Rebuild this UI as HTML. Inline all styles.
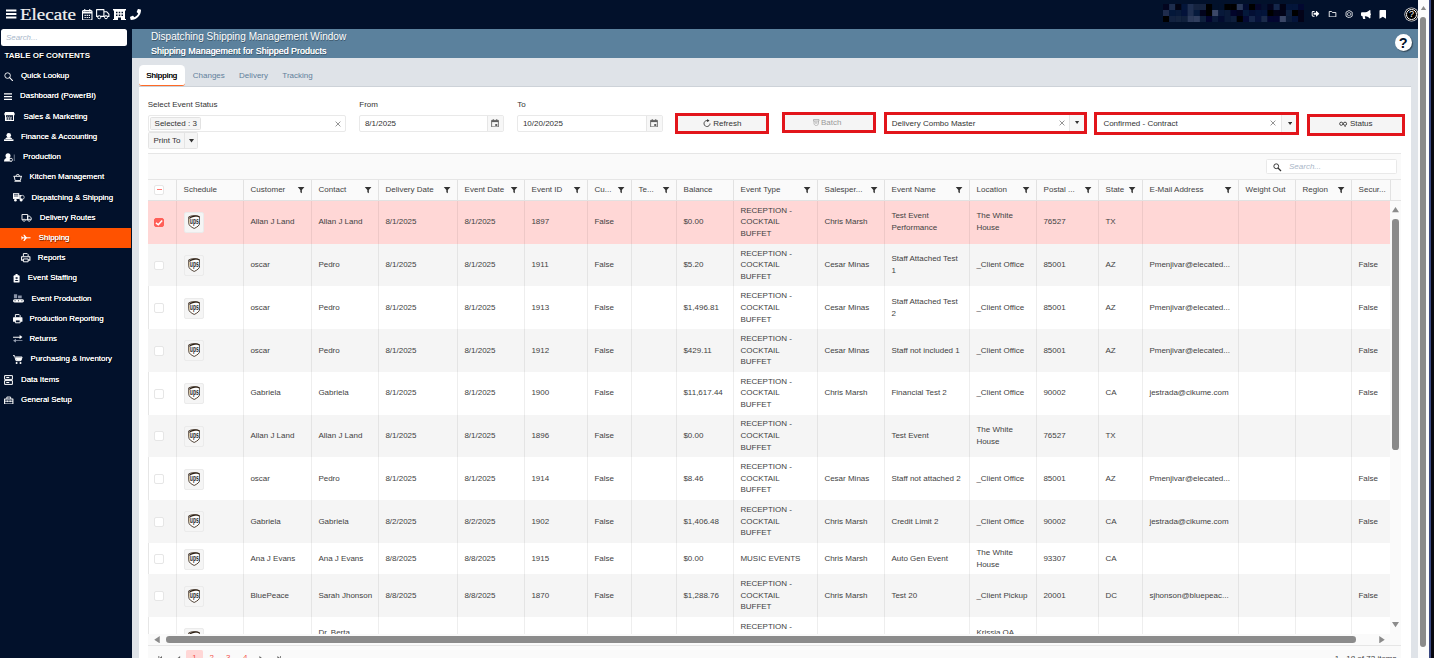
<!DOCTYPE html>
<html lang="en"><head><meta charset="utf-8"><title>Dispatching Shipping Management Window</title>
<style>
*{box-sizing:border-box}
html,body{margin:0;padding:0}
body{width:1434px;height:658px;overflow:hidden;position:relative;background:#fff;font-family:"Liberation Sans",Arial,sans-serif;font-size:8px;color:#424242;line-height:1.45}
.abs{position:absolute}
#topbar{left:0;top:0;width:1418px;height:29px;background:#02112b}
#sidebar{left:0;top:29px;width:132px;height:629px;background:#02112b}
#titlebar{left:132px;top:29px;width:1286px;height:29px;background:#5b819d}
#tabstrip{left:132px;top:58px;width:1286px;height:600px;background:#dfe3e8}
#panel{left:138.5px;top:86.8px;width:1272.5px;height:572px;background:#fff}
#tabline{left:138.5px;top:86px;width:1272.5px;height:1px;background:#cdd2d8}
.tab{position:absolute;top:64.8px;height:21px;line-height:21px;font-size:8px;color:#5f7f9b;white-space:nowrap}
.tab.act{left:138.6px;width:46.3px;background:#fff;border-radius:4.5px 4.5px 3px 3px;border-bottom:1.2px solid #ff6a26;color:#111;text-align:center;text-shadow:0 0 .2px #000}
.t1{left:151px;top:29.5px;font-size:10.1px;color:#fff;line-height:13px;white-space:nowrap;text-shadow:.5px .5px .5px rgba(0,0,0,.35)}
.t2{left:151px;top:45px;font-size:8.95px;color:#fff;line-height:13px;white-space:nowrap;text-shadow:0 0 .5px #fff,.5px .5px .5px rgba(0,0,0,.4)}
.sb{position:absolute;left:0;width:131px;height:20.2px;line-height:20.2px;color:#fff;font-size:7.9px;white-space:nowrap;text-shadow:0 0 .5px #fff,.5px .5px .7px rgba(0,0,0,.7)}
.sb span{position:absolute;top:0}
.sb svg{position:absolute;fill:#fff}
.sb.on{background:#ff5200}
.lbl{position:absolute;font-size:8px;line-height:10px;white-space:nowrap;color:#333}
.inp{position:absolute;border:.8px solid #e9e9e9;border-radius:2px;background:#fff;height:17px;line-height:15px;font-size:8px;color:#333;white-space:nowrap}
.red{position:absolute;border:3px solid #e2151b}
.btn{position:absolute;background:#f5f5f5;border:.8px solid #e4e4e4;border-radius:1.5px;text-align:center;font-size:8px;color:#333;white-space:nowrap}
#grid{left:147.5px;top:153.2px;width:1253.8px;height:520px;border:.8px solid #e6e6e6;background:#fff}
#gtool{left:148.2px;top:154px;width:1252.4px;height:26.3px;background:#fafafa;border-bottom:.8px solid #e6e6e6}
#ghead{left:148.2px;top:180.3px;width:1252.4px;height:20.3px;background:#fafafa;border-bottom:.8px solid #e2e2e2}
.hc{position:absolute;top:180.3px;height:20.3px;line-height:20px;border-left:.8px solid #e2e2e2;padding-left:6.6px;font-size:8px;color:#424242;white-space:nowrap}
.flt{position:absolute;right:5.6px;top:5.6px;width:8.2px;height:8.2px;fill:#333}
.row{position:absolute;left:148.2px;width:1242px;overflow:hidden}
.row.alt{background:#f5f5f5}
.row.sel{background:#ffd7d6}
.c{position:absolute;top:0;height:100%;padding-left:7.4px;display:flex;align-items:center;font-size:8px;line-height:11.6px;color:#424242;white-space:nowrap}
.cb{position:absolute;left:6px;width:9.9px;height:9.9px;border:.8px solid #e6e6e6;border-radius:2px;background:#fff}
.cb.on{background:#ff5f58;border-color:#ff5f58}
.upsb{position:absolute;left:35.6px;width:20.5px;height:21px;border:.8px solid #ebebeb;border-radius:2px;background:#f5f5f5}
.ups{position:absolute;left:3.3px;top:2.1px;width:12.4px;height:14px}
</style></head><body>
<div id="topbar" class="abs"></div><div id="sidebar" class="abs"></div><div id="titlebar" class="abs"></div><div id="tabstrip" class="abs"></div><div id="tabline" class="abs"></div><div id="panel" class="abs"></div><svg class="abs" style="left:6px;top:8.6px" width="11" height="10" viewBox="0 0 11 10"><path d="M0 .6h10.400v2H0zM0 4h10.400v2H0zM0 7.400h10.400v2H0z" fill="#fff"/></svg><div class="abs" style="left:20px;top:3.1px;font-family:'Liberation Serif',serif;font-size:15.7px;line-height:24px;color:#f2f2f2;-webkit-text-stroke:.2px #f2f2f2;white-space:nowrap;transform:scaleX(1.21);transform-origin:0 0">Elecate</div><svg class="abs" style="left:82px;top:8.5px" width="10.500" height="11.500" viewBox="0 0 21 23"><path d="M3 3h15a2 2 0 0 1 2 2v15a2 2 0 0 1-2 2H3a2 2 0 0 1-2-2V5a2 2 0 0 1 2-2z" fill="none" stroke="#fff" stroke-width="2.200"/><path d="M1 5h19v4H1z" fill="#fff"/><path d="M5.500 0v5M15.500 0v5" stroke="#fff" stroke-width="2.200"/><path d="M5 11.500h2.600v2.400H5zM9.200 11.500h2.600v2.400H9.200zM13.400 11.500H16v2.400h-2.600zM5 15.800h2.600v2.400H5zM9.200 15.800h2.600v2.400H9.200zM13.400 15.800H16v2.400h-2.600z" fill="#fff"/></svg><svg class="abs" style="left:96px;top:9px" width="13.500" height="10.500" viewBox="0 0 27 21"><path d="M1.200 1.200h14.600v13.600H1.200zM15.800 5.400h5.400l4.600 4.800v4.600h-10z" fill="none" stroke="#fff" stroke-width="2.200" stroke-linejoin="round"/><circle cx="6.500" cy="16.500" r="3" fill="#02112b" stroke="#fff" stroke-width="2"/><circle cx="20" cy="16.500" r="3" fill="#02112b" stroke="#fff" stroke-width="2"/></svg><svg class="abs" style="left:113px;top:8.5px" width="13" height="11.500" viewBox="0 0 26 23"><path d="M0 0h26v3h-2v17h2v3H16v-6h-6v6H0v-3h2V3H0z" fill="#fff"/><path d="M6 5.500h3v3H6zM11.500 5.500h3v3h-3zM17 5.500h3v3h-3zM6 11h3v3H6zM11.500 11h3v3h-3zM17 11h3v3h-3z" fill="#02112b"/></svg><svg class="abs" style="left:130px;top:8.5px" width="11" height="11" viewBox="0 0 512 512"><path fill="#fff" d="M493.400 24.600l-104-24c-11.300-2.600-22.900 3.300-27.500 13.900l-48 112c-4.200 9.800-1.400 21.300 6.900 28l60.600 49.600c-36 76.700-98.900 140.500-177.200 177.200l-49.600-60.600c-6.800-8.300-18.200-11.100-28-6.900l-112 48C3.900 366.500-2 378.100.6 389.400l24 104C27.100 504.200 36.700 512 48 512c256.100 0 464-207.500 464-464 0-11.200-7.700-20.900-18.600-23.400z"/></svg><svg class="abs" style="left:1162.800px;top:3.900px" width="141.400" height="18" viewBox="0 0 141.400 18"><rect x="0.00" y="0.0" width="6.300" height="6.150" fill="#03051f"/><rect x="6.14" y="0.0" width="6.300" height="6.150" fill="#1d2d4d"/><rect x="12.29" y="0.0" width="6.300" height="6.150" fill="#020312"/><rect x="18.43" y="0.0" width="6.300" height="6.150" fill="#03153a"/><rect x="24.58" y="0.0" width="6.300" height="6.150" fill="#1f2f50"/><rect x="30.72" y="0.0" width="6.300" height="6.150" fill="#15233f"/><rect x="36.87" y="0.0" width="6.300" height="6.150" fill="#15233f"/><rect x="43.02" y="0.0" width="6.300" height="6.150" fill="#000000"/><rect x="49.16" y="0.0" width="6.300" height="6.150" fill="#02112b"/><rect x="55.30" y="0.0" width="6.300" height="6.150" fill="#02112b"/><rect x="61.45" y="0.0" width="6.300" height="6.150" fill="#000000"/><rect x="67.59" y="0.0" width="6.300" height="6.150" fill="#000000"/><rect x="73.74" y="0.0" width="6.300" height="6.150" fill="#2a3858"/><rect x="79.88" y="0.0" width="6.300" height="6.150" fill="#020c30"/><rect x="86.03" y="0.0" width="6.300" height="6.150" fill="#000000"/><rect x="92.17" y="0.0" width="6.300" height="6.150" fill="#05062a"/><rect x="98.32" y="0.0" width="6.300" height="6.150" fill="#04102e"/><rect x="104.46" y="0.0" width="6.300" height="6.150" fill="#03041e"/><rect x="110.61" y="0.0" width="6.300" height="6.150" fill="#14264a"/><rect x="116.75" y="0.0" width="6.300" height="6.150" fill="#020214"/><rect x="122.90" y="0.0" width="6.300" height="6.150" fill="#03153a"/><rect x="129.04" y="0.0" width="6.300" height="6.150" fill="#03153a"/><rect x="135.19" y="0.0" width="6.300" height="6.150" fill="#020830"/><rect x="0.00" y="6.0" width="6.300" height="6.150" fill="#1f2c4c"/><rect x="6.14" y="6.0" width="6.300" height="6.150" fill="#04183a"/><rect x="12.29" y="6.0" width="6.300" height="6.150" fill="#081a3a"/><rect x="18.43" y="6.0" width="6.300" height="6.150" fill="#03123a"/><rect x="24.58" y="6.0" width="6.300" height="6.150" fill="#1f2f50"/><rect x="30.72" y="6.0" width="6.300" height="6.150" fill="#061a3c"/><rect x="36.87" y="6.0" width="6.300" height="6.150" fill="#02031c"/><rect x="43.02" y="6.0" width="6.300" height="6.150" fill="#000000"/><rect x="49.16" y="6.0" width="6.300" height="6.150" fill="#3c4868"/><rect x="55.30" y="6.0" width="6.300" height="6.150" fill="#08193a"/><rect x="61.45" y="6.0" width="6.300" height="6.150" fill="#0a1a38"/><rect x="67.59" y="6.0" width="6.300" height="6.150" fill="#02042a"/><rect x="73.74" y="6.0" width="6.300" height="6.150" fill="#020420"/><rect x="79.88" y="6.0" width="6.300" height="6.150" fill="#04183a"/><rect x="86.03" y="6.0" width="6.300" height="6.150" fill="#030f34"/><rect x="92.17" y="6.0" width="6.300" height="6.150" fill="#03143a"/><rect x="98.32" y="6.0" width="6.300" height="6.150" fill="#03143a"/><rect x="104.46" y="6.0" width="6.300" height="6.150" fill="#000000"/><rect x="110.61" y="6.0" width="6.300" height="6.150" fill="#020318"/><rect x="116.75" y="6.0" width="6.300" height="6.150" fill="#020318"/><rect x="122.90" y="6.0" width="6.300" height="6.150" fill="#0e2040"/><rect x="129.04" y="6.0" width="6.300" height="6.150" fill="#000000"/><rect x="135.19" y="6.0" width="6.300" height="6.150" fill="#030318"/><rect x="0.00" y="12.0" width="6.300" height="6.150" fill="#000000"/><rect x="6.14" y="12.0" width="6.300" height="6.150" fill="#122240"/><rect x="12.29" y="12.0" width="6.300" height="6.150" fill="#14243f"/><rect x="18.43" y="12.0" width="6.300" height="6.150" fill="#10203c"/><rect x="24.58" y="12.0" width="6.300" height="6.150" fill="#2c3a5a"/><rect x="30.72" y="12.0" width="6.300" height="6.150" fill="#303e5e"/><rect x="36.87" y="12.0" width="6.300" height="6.150" fill="#0e1f3c"/><rect x="43.02" y="12.0" width="6.300" height="6.150" fill="#03042e"/><rect x="49.16" y="12.0" width="6.300" height="6.150" fill="#0a1a3a"/><rect x="55.30" y="12.0" width="6.300" height="6.150" fill="#030c30"/><rect x="61.45" y="12.0" width="6.300" height="6.150" fill="#0a1a38"/><rect x="67.59" y="12.0" width="6.300" height="6.150" fill="#0e1e3c"/><rect x="73.74" y="12.0" width="6.300" height="6.150" fill="#000000"/><rect x="79.88" y="12.0" width="6.300" height="6.150" fill="#040a34"/><rect x="86.03" y="12.0" width="6.300" height="6.150" fill="#15264a"/><rect x="92.17" y="12.0" width="6.300" height="6.150" fill="#06123a"/><rect x="98.32" y="12.0" width="6.300" height="6.150" fill="#1a2a4a"/><rect x="104.46" y="12.0" width="6.300" height="6.150" fill="#030630"/><rect x="110.61" y="12.0" width="6.300" height="6.150" fill="#030630"/><rect x="116.75" y="12.0" width="6.300" height="6.150" fill="#3a4666"/><rect x="122.90" y="12.0" width="6.300" height="6.150" fill="#0c1c3a"/><rect x="129.04" y="12.0" width="6.300" height="6.150" fill="#04143a"/><rect x="135.19" y="12.0" width="6.300" height="6.150" fill="#030318"/></svg><svg class="abs" style="left:1310.600px;top:10.300px" width="9" height="7.600" viewBox="0 0 512 512"><path fill="#fff" d="M497 273L329 441c-15 15-41 4.500-41-17v-96H152c-13.300 0-24-10.700-24-24v-96c0-13.300 10.700-24 24-24h136V88c0-21.400 25.900-32 41-17l168 168c9.300 9.400 9.300 24.600 0 34zM192 436v-40c0-6.600-5.400-12-12-12H96c-17.700 0-32-14.300-32-32V160c0-17.700 14.300-32 32-32h84c6.600 0 12-5.400 12-12V76c0-6.600-5.400-12-12-12H96c-53 0-96 43-96 96v192c0 53 43 96 96 96h84c6.600 0 12-5.400 12-12z"/></svg><svg class="abs" style="left:1327.800px;top:11px" width="9.100" height="6.400" viewBox="0 0 19 16"><path d="M1.200 1.200h6l2 2.600h8.600v11H1.200z" fill="none" stroke="#fff" stroke-width="2.200" stroke-linejoin="round"/></svg><svg class="abs" style="left:1344.900px;top:10px" width="8.200" height="8.400" viewBox="0 0 18 19"><path d="M9 1l7 4v9l-7 4-7-4V5z" fill="none" stroke="#fff" stroke-width="1.800"/><path d="M9 5.500l3.500 2v4L9 13.500l-3.500-2v-4z" fill="none" stroke="#fff" stroke-width="1.500"/></svg><svg class="abs" style="left:1361px;top:9.700px" width="10" height="9" viewBox="0 0 576 512"><path fill="#fff" d="M576 240c0-23.630-12.950-44.040-32-55.120V32.010C544 23.260 537.020 0 512 0c-7.120 0-14.190 2.380-19.980 7.020l-85.030 68.030C364.280 109.190 310.660 128 256 128H64c-35.350 0-64 28.650-64 64v96c0 35.350 28.650 64 64 64h33.700c-1.390 10.480-2.180 21.140-2.180 32 0 39.770 9.260 77.350 25.560 110.940 5.190 10.690 16.520 17.060 28.400 17.060h74.280c26.050 0 41.690-29.840 25.900-50.560-16.400-21.520-26.150-48.360-26.150-77.440 0-11.110 1.620-21.790 4.410-32H256c54.660 0 108.280 18.810 150.980 52.950l85.030 68.030a32.023 32.023 0 0 0 19.980 7.020c24.920 0 32-22.780 32-32V295.130C563.050 284.040 576 263.630 576 240z"/></svg><svg class="abs" style="left:1378.900px;top:10px" width="7.600" height="8.800" viewBox="0 0 384 512"><path fill="#fff" d="M0 512V48C0 21.490 21.490 0 48 0h288c26.510 0 48 21.490 48 48v464L192 400 0 512z"/></svg><div class="abs" style="left:1406.200px;top:9px;width:10.800px;height:10.800px;border-radius:50%;border:1.200px solid #fff;background:#000;color:#fff;font-weight:400;font-size:9px;line-height:9.400px;text-align:center;box-shadow:0 0 0 .8px #000,0 0 0 1.600px rgba(255,255,255,.85)">?</div><div class="abs" style="left:1394.500px;top:33.800px;width:17.600px;height:17.600px;border-radius:50%;background:#fff;color:#02112b;font-weight:700;font-size:14.500px;line-height:18px;text-align:center;box-shadow:1px 1px 1px rgba(0,0,0,.45)">?</div><div class="abs t1">Dispatching Shipping Management Window</div><div class="abs t2">Shipping Management for Shipped Products</div><div class="tab act">Shipping</div><div class="tab" style="left:192.8px">Changes</div><div class="tab" style="left:239.1px">Delivery</div><div class="tab" style="left:282.3px">Tracking</div><div class="abs" style="left:1px;top:29px;width:126px;height:17.400px;background:#fff;border-radius:2.500px;font-size:7.900px;line-height:17.400px;padding-left:5px;color:#a9b7ca;font-style:italic">Search...</div><div class="abs" style="left:4.400px;top:50.300px;font-size:8px;line-height:11px;font-weight:700;color:#fff;white-space:nowrap;text-shadow:.5px .5px .6px #000">TABLE OF CONTENTS</div><div class="sb" style="top:66.2px"><svg viewBox="0 0 20 20" style="left:4px;top:5.6px;width:9px;height:9px"><circle cx="8" cy="8" r="6.200" fill="none" stroke="#fff" stroke-width="2"/><path d="M12.600 12.600L19 19" stroke="#fff" stroke-width="2.400" stroke-linecap="round"/></svg><span style="left:20.9px">Quick Lookup</span></div><div class="sb" style="top:86.4px"><svg viewBox="0 0 16 14" style="left:4px;top:6.3px;width:8px;height:7.5px"><path d="M0 0h16v2.600H0zM0 5.500h16v2.600H0zM0 11h16v2.600H0z"/></svg><span style="left:20.1px">Dashboard (PowerBI)</span></div><div class="sb" style="top:106.7px"><svg viewBox="0 0 22 18" style="left:4px;top:5.6px;width:11px;height:9px"><path d="M2.500 0h17L22 4.500H0zM1 4.500h20v2.200H1zM2 6h2v12H2zM18 6h2v12h-2zM2 16h18v2H2z"/><path d="M4 9l2.500 7M8 9l2.500 7M12 9l2.500 7M7 9l-2.500 7M11 9l-2.500 7M15.500 9l-2.500 7" stroke="#fff" stroke-width="1.200" fill="none"/></svg><span style="left:23.4px">Sales &amp; Marketing</span></div><div class="sb" style="top:126.9px"><svg viewBox="0 0 20 18" style="left:4px;top:5.8px;width:9.5px;height:8.5px"><circle cx="10" cy="5" r="4.800"/><path d="M2.500 12.500C4 9.500 7 9 10 9s6 .5 7.500 3.500z"/><path d="M0 13.500h20V18H0z"/></svg><span style="left:20.9px">Finance &amp; Accounting</span></div><div class="sb" style="top:147.1px"><svg viewBox="0 0 24 18" style="left:4px;top:5.6px;width:12px;height:9px"><circle cx="8" cy="5.500" r="5"/><path d="M0 17c0-5 3-7.500 8-7.500s8 2.500 8 7.500z"/><circle cx="14" cy="13.500" r="3" fill="#02112b" stroke="#fff" stroke-width="1.600"/><path d="M20.500 3v13" stroke="#9aa3b5" stroke-width="1.400"/></svg><span style="left:23.1px">Production</span></div><div class="sb" style="top:167.3px"><svg viewBox="0 0 20 20" style="left:13px;top:5.3px;width:9.5px;height:9.5px"><path d="M2.500 7l2 9h11l2-9M1 7h18" fill="none" stroke="#fff" stroke-width="2" stroke-linejoin="round"/><path d="M6.500 6c0-4 7-4 7 0" fill="none" stroke="#fff" stroke-width="2"/><path d="M3 18.500h14" stroke="#fff" stroke-width="2"/></svg><span style="left:29.6px">Kitchen Management</span></div><div class="sb" style="top:187.6px"><svg viewBox="0 0 24 18" style="left:13px;top:5.6px;width:11.5px;height:9px"><path d="M0 0h13v12H0z"/><path d="M13 4h4l4 4v5h-8z"/><circle cx="5" cy="14.500" r="2.700"/><circle cx="17" cy="14.500" r="2.700"/><circle cx="19.500" cy="8.500" r="4" fill="#02112b" stroke="#fff" stroke-width="1.400"/><path d="M2 3h9M2 6h9" stroke="#02112b" stroke-width="1.400"/></svg><span style="left:31.5px">Dispatching &amp; Shipping</span></div><div class="sb" style="top:207.8px"><svg viewBox="0 0 26 20" style="left:21px;top:6.2px;width:11.2px;height:7.8px"><path d="M1.200 1.200h14.600v13.600H1.200zM15.800 5.400h5l4 4.600v4.800h-9z" fill="none" stroke="#fff" stroke-width="2.400" stroke-linejoin="round"/><circle cx="6.500" cy="16" r="2.800" fill="#02112b" stroke="#fff" stroke-width="2"/><circle cx="19.500" cy="16" r="2.800" fill="#02112b" stroke="#fff" stroke-width="2"/></svg><span style="left:39.8px">Delivery Routes</span></div><div class="abs" style="left:0;top:228.4px;width:131px;height:20.1px;background:#ff5200"></div><div class="sb" style="top:228.0px"><svg viewBox="0 0 24 16" style="left:21px;top:6.3px;width:10px;height:7.6px"><path d="M1.500 8h20.500" stroke="#fff" stroke-width="2.400" stroke-linecap="round" fill="none"/><path d="M9 8L5.500 .5h2.800L14.500 8 8.300 15.500H5.500z"/><path d="M2.500 8L.3 4.200h2L5 8 2.300 11.800h-2z"/></svg><span style="left:38.8px">Shipping</span></div><div class="sb" style="top:248.2px"><svg viewBox="0 0 20 20" style="left:21px;top:5.3px;width:9.5px;height:9.5px"><path d="M5 7V1.200h8l2 2V7" fill="none" stroke="#fff" stroke-width="2"/><path d="M1.200 8h17.600v7H1.200z" fill="none" stroke="#fff" stroke-width="2.200" stroke-linejoin="round"/><path d="M5 12.500h10v6H5z" fill="#02112b" stroke="#fff" stroke-width="2"/></svg><span style="left:37.8px">Reports</span></div><div class="sb" style="top:268.4px"><svg viewBox="0 0 16 20" style="left:13px;top:5.8px;width:7.2px;height:8.6px"><rect x="1" y="3" width="14" height="17" rx="2"/><rect x="5.500" y="0" width="5" height="5" rx="1"/><circle cx="8" cy="9.500" r="2.600" fill="#02112b"/><path d="M3.800 16.500c0-3.600 8.400-3.600 8.400 0z" fill="#02112b"/><circle cx="8" cy="9.500" r="1.100" fill="#cfd6e4"/></svg><span style="left:27.8px">Event Staffing</span></div><div class="sb" style="top:288.7px"><svg viewBox="0 0 24 18" style="left:13px;top:5.8px;width:11px;height:8.5px"><path d="M2 0h7v9H2zM11 3h8v6h-8z" fill="#8892a6"/><rect x="0" y="11" width="24" height="7" rx="3.500"/><circle cx="4.500" cy="14.500" r="1.300" fill="#02112b"/><circle cx="12" cy="14.500" r="1.300" fill="#02112b"/><circle cx="19.500" cy="14.500" r="1.300" fill="#02112b"/></svg><span style="left:31.4px">Event Production</span></div><div class="sb" style="top:308.9px"><svg viewBox="0 0 20 20" style="left:13px;top:5.3px;width:9.5px;height:9.5px"><path d="M5 7V1.200h8l2 2V7" fill="none" stroke="#fff" stroke-width="2"/><path d="M1.200 8h17.600v7H1.200z" fill="#fff" stroke="#fff" stroke-width="2.200" stroke-linejoin="round"/><path d="M5 12.500h10v6H5z" fill="#02112b" stroke="#fff" stroke-width="2"/></svg><span style="left:29.4px">Production Reporting</span></div><div class="sb" style="top:329.1px"><svg viewBox="0 0 20 16" style="left:13px;top:6.3px;width:9.5px;height:7.5px"><path d="M0 3.500h14V0l6 4.500-6 4.500V5.800H0z" /><path d="M20 11H6V8l-6 4 6 4v-3h14z" fill="#9aa3b5"/></svg><span style="left:29.4px">Returns</span></div><div class="sb" style="top:349.4px"><svg viewBox="0 0 22 20" style="left:13.4px;top:5.3px;width:10px;height:9.5px"><path d="M0 1h3.500l3 11h11l2.500-8H6" fill="none" stroke="#fff" stroke-width="2.200" stroke-linejoin="round"/><path d="M6 5h13.500l-2 6.500H7.500z"/><circle cx="8" cy="17" r="2.200"/><circle cx="16.500" cy="17" r="2.200"/></svg><span style="left:30.4px">Purchasing &amp; Inventory</span></div><div class="sb" style="top:369.6px"><svg viewBox="0 0 18 20" style="left:4px;top:5.1px;width:9px;height:10px"><path d="M1.200 1.200h15.600v7.600H1.200zM1.200 11.200h15.600v7.600H1.200z" fill="none" stroke="#fff" stroke-width="2" stroke-linejoin="round"/><path d="M4.500 5h6M4.500 15h6" stroke="#fff" stroke-width="2"/></svg><span style="left:21px">Data Items</span></div><div class="sb" style="top:389.8px"><svg viewBox="0 0 20 18" style="left:4px;top:5.8px;width:9.5px;height:8.5px"><path d="M1.200 6.200h17.600v10.600H1.200z" fill="none" stroke="#fff" stroke-width="2.200" stroke-linejoin="round"/><path d="M6 6V2.200h8V6" fill="none" stroke="#fff" stroke-width="2"/><path d="M1 11h18" stroke="#fff" stroke-width="2"/><path d="M7 9.500v3.500M13 9.500v3.500" stroke="#fff" stroke-width="2"/></svg><span style="left:21px">General Setup</span></div><div class="lbl" style="left:147.700px;top:100.300px">Select Event Status</div><div class="lbl" style="left:359.300px;top:100.300px">From</div><div class="lbl" style="left:517.300px;top:100.300px">To</div><div class="inp" style="left:147.700px;top:114.500px;width:198px"><span style="position:absolute;left:1.300px;top:1.700px;height:12.400px;line-height:11px;padding:0 3.600px;background:#f5f5f5;border:.8px solid #e2e2e2;border-radius:1.500px">Selected : 3</span><svg style="position:absolute;right:3.500px;top:5px" width="6" height="6" viewBox="0 0 10 10"><path d="M1 1l8 8M9 1l-8 8" stroke="#777" stroke-width="1.300"/></svg></div><div class="inp" style="left:359.300px;top:114.500px;width:144.800px;padding-left:4.600px">8/1/2025<span style="position:absolute;right:0;top:0;width:16px;height:15.400px;background:#f7f7f7;border-left:.8px solid #e6e6e6"><svg style="position:absolute;right:4px;top:3.400px" width="8" height="8.500" viewBox="0 0 16 17"><path d="M1.200 2.800h13.600v13H1.200z" fill="none" stroke="#606060" stroke-width="1.700"/><path d="M1.200 2.800h13.600v3.400H1.200z" fill="#606060"/><path d="M4.500 0v4M11.500 0v4" stroke="#606060" stroke-width="1.700"/><path d="M8.500 10h4v4h-4z" fill="#606060"/></svg></span></div><div class="inp" style="left:517.300px;top:114.500px;width:145.400px;padding-left:4.600px">10/20/2025<span style="position:absolute;right:0;top:0;width:16px;height:15.400px;background:#f7f7f7;border-left:.8px solid #e6e6e6"><svg style="position:absolute;right:4px;top:3.400px" width="8" height="8.500" viewBox="0 0 16 17"><path d="M1.200 2.800h13.600v13H1.200z" fill="none" stroke="#606060" stroke-width="1.700"/><path d="M1.200 2.800h13.600v3.400H1.200z" fill="#606060"/><path d="M4.500 0v4M11.500 0v4" stroke="#606060" stroke-width="1.700"/><path d="M8.500 10h4v4h-4z" fill="#606060"/></svg></span></div><div class="btn" style="left:147.700px;top:132px;width:50.800px;height:16.600px;line-height:15px;text-align:left;padding-left:4.800px">Print To<span style="position:absolute;left:35.500px;top:0;height:15px;border-left:.8px solid #e4e4e4"></span><svg style="position:absolute;left:40.500px;top:6px" width="5" height="3.500" viewBox="0 0 10 7"><path d="M0 0h10L5 7z" fill="#333"/></svg></div><div class="red" style="left:675.100px;top:113.100px;width:94px;height:21.200px"></div><div class="btn" style="left:678.100px;top:116.100px;width:88px;height:15.200px;line-height:15.600px;border:0"><svg style="vertical-align:-1.800px;margin-right:2.500px" width="8" height="8.500" viewBox="0 0 16 17"><path d="M10.500 3.600A6 6 0 1 0 14 9" fill="none" stroke="#333" stroke-width="1.700"/><path d="M8.500 0l4.500 3.600-5 2.400z" fill="#333"/></svg>Refresh</div><div class="red" style="left:781.500px;top:112.200px;width:94.500px;height:20.500px"></div><div class="btn" style="left:784.500px;top:115.200px;width:88.500px;height:14.500px;line-height:16.800px;border:0;color:#9a9a9a;padding-right:3px"><svg style="vertical-align:-1px;margin-right:1.500px" width="6.500" height="7" viewBox="0 0 13 14"><path d="M1 1h11v3H1zM2 4v5c0 2 2 3.500 4.500 4.500C9 12.500 11 11 11 9V4" fill="none" stroke="#9a9a9a" stroke-width="1.300"/><path d="M4 6.500h5M4 8.500h5" stroke="#9a9a9a" stroke-width="1"/></svg>Batch</div><div class="red" style="left:884.200px;top:111.700px;width:202.500px;height:22.600px"></div><div class="inp" style="left:887.200px;top:114.700px;width:196.500px;height:16.600px;border:0;border-radius:0;padding-left:4.600px;line-height:18.400px">Delivery Combo Master<svg style="position:absolute;right:18.7px;top:5.200px" width="6" height="6" viewBox="0 0 10 10"><path d="M1 1l8 8M9 1l-8 8" stroke="#777" stroke-width="1.300"/></svg><span style="position:absolute;right:0;top:0;width:14.400px;height:100%;background:#f7f7f7;border-left:.8px solid #e6e6e6"><svg style="position:absolute;left:5.200px;top:6.800px" width="4.200" height="3" viewBox="0 0 10 7"><path d="M0 0h10L5 7z" fill="#333"/></svg></span></div><div class="red" style="left:1094.200px;top:112.200px;width:204.700px;height:22.600px"></div><div class="inp" style="left:1097.200px;top:115.200px;width:198.700px;height:16.600px;border:0;border-radius:0;padding-left:6.200px;line-height:17px">Confirmed - Contract<svg style="position:absolute;right:19.6px;top:5.200px" width="6" height="6" viewBox="0 0 10 10"><path d="M1 1l8 8M9 1l-8 8" stroke="#777" stroke-width="1.300"/></svg><span style="position:absolute;right:0;top:0;width:14.400px;height:100%;background:#f7f7f7;border-left:.8px solid #e6e6e6"><svg style="position:absolute;left:5.200px;top:6.800px" width="4.200" height="3" viewBox="0 0 10 7"><path d="M0 0h10L5 7z" fill="#333"/></svg></span></div><div class="red" style="left:1307.100px;top:113.900px;width:97.800px;height:21.700px"></div><div class="btn" style="left:1310.100px;top:116.900px;width:91.800px;height:15.700px;line-height:14px;border:0"><svg style="vertical-align:-1.500px;margin-right:1.500px" width="9" height="6.500" viewBox="0 0 18 13"><circle cx="4.500" cy="5.500" r="3.200" fill="none" stroke="#333" stroke-width="1.800"/><circle cx="12" cy="5.500" r="3.200" fill="none" stroke="#333" stroke-width="1.800"/><path d="M12 9v4l2-1.500" stroke="#333" stroke-width="1.400" fill="none"/></svg>Status</div><div id="grid" class="abs"></div><div id="gtool" class="abs"></div><div id="ghead" class="abs"></div><div class="inp" style="left:1265.500px;top:158.600px;width:131px;height:15.800px;border-radius:1.500px"><svg style="position:absolute;left:6.500px;top:3.600px" width="8.500" height="8.500" viewBox="0 0 17 17"><circle cx="6.500" cy="6.500" r="4.800" fill="none" stroke="#333" stroke-width="1.900"/><path d="M10 10l6 6" stroke="#333" stroke-width="2.400"/></svg><span style="position:absolute;left:22.500px;top:0;line-height:14.600px;font-style:italic;color:#a9b6c7">Search...</span></div><div class="hc" style="left:148.2px;width:28.5px;border-left:0;padding:0"><span class="cb" style="top:5.200px;left:6.200px;width:9.500px;height:9.600px"><i style="position:absolute;left:1.400px;top:2.800px;width:5.600px;height:1.200px;background:#ff7671"></i></span></div><div class="hc" style="left:176.0px;width:67.0px">Schedule</div><div class="hc" style="left:243.0px;width:68.0px">Customer<svg class="flt" viewBox="0 0 16 16"><path d="M1.5 2h13l-5 6v6l-3-1.6V8z"/></svg></div><div class="hc" style="left:311.0px;width:67.0px">Contact<svg class="flt" viewBox="0 0 16 16"><path d="M1.5 2h13l-5 6v6l-3-1.6V8z"/></svg></div><div class="hc" style="left:378.0px;width:79.0px">Delivery Date<svg class="flt" viewBox="0 0 16 16"><path d="M1.5 2h13l-5 6v6l-3-1.6V8z"/></svg></div><div class="hc" style="left:457.0px;width:67.0px">Event Date<svg class="flt" viewBox="0 0 16 16"><path d="M1.5 2h13l-5 6v6l-3-1.6V8z"/></svg></div><div class="hc" style="left:524.0px;width:63.0px">Event ID<svg class="flt" viewBox="0 0 16 16"><path d="M1.5 2h13l-5 6v6l-3-1.6V8z"/></svg></div><div class="hc" style="left:587.0px;width:44.0px">Cu...<svg class="flt" viewBox="0 0 16 16"><path d="M1.5 2h13l-5 6v6l-3-1.6V8z"/></svg></div><div class="hc" style="left:631.0px;width:45.0px">Te...<svg class="flt" viewBox="0 0 16 16"><path d="M1.5 2h13l-5 6v6l-3-1.6V8z"/></svg></div><div class="hc" style="left:676.0px;width:57.0px">Balance</div><div class="hc" style="left:733.0px;width:84.0px">Event Type<svg class="flt" viewBox="0 0 16 16"><path d="M1.5 2h13l-5 6v6l-3-1.6V8z"/></svg></div><div class="hc" style="left:817.0px;width:67.0px">Salesper...<svg class="flt" viewBox="0 0 16 16"><path d="M1.5 2h13l-5 6v6l-3-1.6V8z"/></svg></div><div class="hc" style="left:884.0px;width:85.0px">Event Name<svg class="flt" viewBox="0 0 16 16"><path d="M1.5 2h13l-5 6v6l-3-1.6V8z"/></svg></div><div class="hc" style="left:969.0px;width:67.0px">Location<svg class="flt" viewBox="0 0 16 16"><path d="M1.5 2h13l-5 6v6l-3-1.6V8z"/></svg></div><div class="hc" style="left:1036.0px;width:62.0px">Postal ...<svg class="flt" viewBox="0 0 16 16"><path d="M1.5 2h13l-5 6v6l-3-1.6V8z"/></svg></div><div class="hc" style="left:1098.0px;width:44.0px">State<svg class="flt" viewBox="0 0 16 16"><path d="M1.5 2h13l-5 6v6l-3-1.6V8z"/></svg></div><div class="hc" style="left:1142.0px;width:96.0px">E-Mail Address<svg class="flt" viewBox="0 0 16 16"><path d="M1.5 2h13l-5 6v6l-3-1.6V8z"/></svg></div><div class="hc" style="left:1238.0px;width:57.0px">Weight Out</div><div class="hc" style="left:1295.0px;width:56.0px">Region<svg class="flt" viewBox="0 0 16 16"><path d="M1.5 2h13l-5 6v6l-3-1.6V8z"/></svg></div><div class="hc" style="left:1351.0px;width:39.0px">Secur...</div><div class="hc" style="left:1390px;width:10.600px;padding:0"></div><div class="row sel" style="top:200.5px;height:43.1px"><span class="cb on" style="top:17.1px"><svg style="position:absolute;left:-.8px;top:-.8px" width="9.900" height="9.900" viewBox="0 0 9.900 9.900"><path d="M1.900 4.900l2.400 1.900L8.200 2.400" fill="none" stroke="#fff" stroke-width="1.500"/></svg></span><div class="c" style="left:27.8px;width:67.0px"></div><span class="upsb" style="top:11.5px"><svg class="ups" viewBox="0 0 24 27"><path d="M1.400 3.600C6.500 .4 17.500 .4 22.600 3.600v11.600c0 5.400-5 8-10.600 10.800C6.400 23.200 1.400 20.600 1.400 15.200z" fill="#fdfdfd" stroke="#3b2a1c" stroke-width="1.700"/><path d="M2.600 6.400C8 1.200 19 1 22 3.800" fill="none" stroke="#2a1d12" stroke-width="2.200"/><text x="12.300" y="17.800" text-anchor="middle" font-family="Liberation Sans, sans-serif" font-weight="700" font-size="17" fill="#2b2b2b" textLength="17.500" lengthAdjust="spacingAndGlyphs">ups</text></svg></span><div class="c" style="left:94.8px;width:68.0px"><span>Allan J Land</span></div><div class="c" style="left:162.8px;width:67.0px"><span>Allan J Land</span></div><div class="c" style="left:229.8px;width:79.0px"><span>8/1/2025</span></div><div class="c" style="left:308.8px;width:67.0px"><span>8/1/2025</span></div><div class="c" style="left:375.8px;width:63.0px"><span>1897</span></div><div class="c" style="left:438.8px;width:44.0px"><span>False</span></div><div class="c" style="left:482.8px;width:45.0px"><span></span></div><div class="c" style="left:527.8px;width:57.0px"><span>$0.00</span></div><div class="c" style="left:584.8px;width:84.0px"><span>RECEPTION -<br>COCKTAIL<br>BUFFET</span></div><div class="c" style="left:668.8px;width:67.0px"><span>Chris Marsh</span></div><div class="c" style="left:735.8px;width:85.0px"><span>Test Event<br>Performance</span></div><div class="c" style="left:820.8px;width:67.0px"><span>The White<br>House</span></div><div class="c" style="left:887.8px;width:62.0px"><span>76527</span></div><div class="c" style="left:949.8px;width:44.0px"><span>TX</span></div><div class="c" style="left:993.8px;width:96.0px"><span></span></div><div class="c" style="left:1089.8px;width:57.0px"><span></span></div><div class="c" style="left:1146.8px;width:56.0px"><span></span></div><div class="c" style="left:1202.8px;width:39.0px"><span></span></div></div><div class="row alt" style="top:243.6px;height:42.8px"><span class="cb" style="top:17.0px"></span><div class="c" style="left:27.8px;width:67.0px"></div><span class="upsb" style="top:11.4px"><svg class="ups" viewBox="0 0 24 27"><path d="M1.400 3.600C6.500 .4 17.500 .4 22.600 3.600v11.600c0 5.400-5 8-10.600 10.800C6.400 23.200 1.400 20.600 1.400 15.200z" fill="#fdfdfd" stroke="#3b2a1c" stroke-width="1.700"/><path d="M2.600 6.400C8 1.200 19 1 22 3.800" fill="none" stroke="#2a1d12" stroke-width="2.200"/><text x="12.300" y="17.800" text-anchor="middle" font-family="Liberation Sans, sans-serif" font-weight="700" font-size="17" fill="#2b2b2b" textLength="17.500" lengthAdjust="spacingAndGlyphs">ups</text></svg></span><div class="c" style="left:94.8px;width:68.0px"><span>oscar</span></div><div class="c" style="left:162.8px;width:67.0px"><span>Pedro</span></div><div class="c" style="left:229.8px;width:79.0px"><span>8/1/2025</span></div><div class="c" style="left:308.8px;width:67.0px"><span>8/1/2025</span></div><div class="c" style="left:375.8px;width:63.0px"><span>1911</span></div><div class="c" style="left:438.8px;width:44.0px"><span>False</span></div><div class="c" style="left:482.8px;width:45.0px"><span></span></div><div class="c" style="left:527.8px;width:57.0px"><span>$5.20</span></div><div class="c" style="left:584.8px;width:84.0px"><span>RECEPTION -<br>COCKTAIL<br>BUFFET</span></div><div class="c" style="left:668.8px;width:67.0px"><span>Cesar Minas</span></div><div class="c" style="left:735.8px;width:85.0px"><span>Staff Attached Test<br>1</span></div><div class="c" style="left:820.8px;width:67.0px"><span>_Client Office</span></div><div class="c" style="left:887.8px;width:62.0px"><span>85001</span></div><div class="c" style="left:949.8px;width:44.0px"><span>AZ</span></div><div class="c" style="left:993.8px;width:96.0px"><span>Pmenjivar@elecated...</span></div><div class="c" style="left:1089.8px;width:57.0px"><span></span></div><div class="c" style="left:1146.8px;width:56.0px"><span></span></div><div class="c" style="left:1202.8px;width:39.0px"><span>False</span></div></div><div class="row" style="top:286.4px;height:42.7px"><span class="cb" style="top:17.0px"></span><div class="c" style="left:27.8px;width:67.0px"></div><span class="upsb" style="top:11.4px"><svg class="ups" viewBox="0 0 24 27"><path d="M1.400 3.600C6.500 .4 17.500 .4 22.600 3.600v11.600c0 5.400-5 8-10.600 10.800C6.400 23.200 1.400 20.600 1.400 15.200z" fill="#fdfdfd" stroke="#3b2a1c" stroke-width="1.700"/><path d="M2.600 6.400C8 1.200 19 1 22 3.800" fill="none" stroke="#2a1d12" stroke-width="2.200"/><text x="12.300" y="17.800" text-anchor="middle" font-family="Liberation Sans, sans-serif" font-weight="700" font-size="17" fill="#2b2b2b" textLength="17.500" lengthAdjust="spacingAndGlyphs">ups</text></svg></span><div class="c" style="left:94.8px;width:68.0px"><span>oscar</span></div><div class="c" style="left:162.8px;width:67.0px"><span>Pedro</span></div><div class="c" style="left:229.8px;width:79.0px"><span>8/1/2025</span></div><div class="c" style="left:308.8px;width:67.0px"><span>8/1/2025</span></div><div class="c" style="left:375.8px;width:63.0px"><span>1913</span></div><div class="c" style="left:438.8px;width:44.0px"><span>False</span></div><div class="c" style="left:482.8px;width:45.0px"><span></span></div><div class="c" style="left:527.8px;width:57.0px"><span>$1,496.81</span></div><div class="c" style="left:584.8px;width:84.0px"><span>RECEPTION -<br>COCKTAIL<br>BUFFET</span></div><div class="c" style="left:668.8px;width:67.0px"><span>Cesar Minas</span></div><div class="c" style="left:735.8px;width:85.0px"><span>Staff Attached Test<br>2</span></div><div class="c" style="left:820.8px;width:67.0px"><span>_Client Office</span></div><div class="c" style="left:887.8px;width:62.0px"><span>85001</span></div><div class="c" style="left:949.8px;width:44.0px"><span>AZ</span></div><div class="c" style="left:993.8px;width:96.0px"><span>Pmenjivar@elecated...</span></div><div class="c" style="left:1089.8px;width:57.0px"><span></span></div><div class="c" style="left:1146.8px;width:56.0px"><span></span></div><div class="c" style="left:1202.8px;width:39.0px"><span>False</span></div></div><div class="row alt" style="top:329.1px;height:42.7px"><span class="cb" style="top:16.9px"></span><div class="c" style="left:27.8px;width:67.0px"></div><span class="upsb" style="top:11.3px"><svg class="ups" viewBox="0 0 24 27"><path d="M1.400 3.600C6.500 .4 17.500 .4 22.600 3.600v11.600c0 5.400-5 8-10.600 10.800C6.400 23.200 1.400 20.600 1.400 15.200z" fill="#fdfdfd" stroke="#3b2a1c" stroke-width="1.700"/><path d="M2.600 6.400C8 1.200 19 1 22 3.800" fill="none" stroke="#2a1d12" stroke-width="2.200"/><text x="12.300" y="17.800" text-anchor="middle" font-family="Liberation Sans, sans-serif" font-weight="700" font-size="17" fill="#2b2b2b" textLength="17.500" lengthAdjust="spacingAndGlyphs">ups</text></svg></span><div class="c" style="left:94.8px;width:68.0px"><span>oscar</span></div><div class="c" style="left:162.8px;width:67.0px"><span>Pedro</span></div><div class="c" style="left:229.8px;width:79.0px"><span>8/1/2025</span></div><div class="c" style="left:308.8px;width:67.0px"><span>8/1/2025</span></div><div class="c" style="left:375.8px;width:63.0px"><span>1912</span></div><div class="c" style="left:438.8px;width:44.0px"><span>False</span></div><div class="c" style="left:482.8px;width:45.0px"><span></span></div><div class="c" style="left:527.8px;width:57.0px"><span>$429.11</span></div><div class="c" style="left:584.8px;width:84.0px"><span>RECEPTION -<br>COCKTAIL<br>BUFFET</span></div><div class="c" style="left:668.8px;width:67.0px"><span>Cesar Minas</span></div><div class="c" style="left:735.8px;width:85.0px"><span>Staff not included 1</span></div><div class="c" style="left:820.8px;width:67.0px"><span>_Client Office</span></div><div class="c" style="left:887.8px;width:62.0px"><span>85001</span></div><div class="c" style="left:949.8px;width:44.0px"><span>AZ</span></div><div class="c" style="left:993.8px;width:96.0px"><span>Pmenjivar@elecated...</span></div><div class="c" style="left:1089.8px;width:57.0px"><span></span></div><div class="c" style="left:1146.8px;width:56.0px"><span></span></div><div class="c" style="left:1202.8px;width:39.0px"><span>False</span></div></div><div class="row" style="top:371.8px;height:42.7px"><span class="cb" style="top:16.9px"></span><div class="c" style="left:27.8px;width:67.0px"></div><span class="upsb" style="top:11.3px"><svg class="ups" viewBox="0 0 24 27"><path d="M1.400 3.600C6.500 .4 17.500 .4 22.600 3.600v11.600c0 5.400-5 8-10.600 10.800C6.400 23.200 1.400 20.600 1.400 15.200z" fill="#fdfdfd" stroke="#3b2a1c" stroke-width="1.700"/><path d="M2.600 6.400C8 1.200 19 1 22 3.800" fill="none" stroke="#2a1d12" stroke-width="2.200"/><text x="12.300" y="17.800" text-anchor="middle" font-family="Liberation Sans, sans-serif" font-weight="700" font-size="17" fill="#2b2b2b" textLength="17.500" lengthAdjust="spacingAndGlyphs">ups</text></svg></span><div class="c" style="left:94.8px;width:68.0px"><span>Gabriela</span></div><div class="c" style="left:162.8px;width:67.0px"><span>Gabriela</span></div><div class="c" style="left:229.8px;width:79.0px"><span>8/1/2025</span></div><div class="c" style="left:308.8px;width:67.0px"><span>8/1/2025</span></div><div class="c" style="left:375.8px;width:63.0px"><span>1900</span></div><div class="c" style="left:438.8px;width:44.0px"><span>False</span></div><div class="c" style="left:482.8px;width:45.0px"><span></span></div><div class="c" style="left:527.8px;width:57.0px"><span>$11,617.44</span></div><div class="c" style="left:584.8px;width:84.0px"><span>RECEPTION -<br>COCKTAIL<br>BUFFET</span></div><div class="c" style="left:668.8px;width:67.0px"><span>Chris Marsh</span></div><div class="c" style="left:735.8px;width:85.0px"><span>Financial Test 2</span></div><div class="c" style="left:820.8px;width:67.0px"><span>_Client Office</span></div><div class="c" style="left:887.8px;width:62.0px"><span>90002</span></div><div class="c" style="left:949.8px;width:44.0px"><span>CA</span></div><div class="c" style="left:993.8px;width:96.0px"><span>jestrada@cikume.com</span></div><div class="c" style="left:1089.8px;width:57.0px"><span></span></div><div class="c" style="left:1146.8px;width:56.0px"><span></span></div><div class="c" style="left:1202.8px;width:39.0px"><span>False</span></div></div><div class="row alt" style="top:414.5px;height:42.7px"><span class="cb" style="top:16.9px"></span><div class="c" style="left:27.8px;width:67.0px"></div><span class="upsb" style="top:11.3px"><svg class="ups" viewBox="0 0 24 27"><path d="M1.400 3.600C6.500 .4 17.500 .4 22.600 3.600v11.600c0 5.400-5 8-10.600 10.800C6.400 23.200 1.400 20.600 1.400 15.200z" fill="#fdfdfd" stroke="#3b2a1c" stroke-width="1.700"/><path d="M2.600 6.400C8 1.200 19 1 22 3.800" fill="none" stroke="#2a1d12" stroke-width="2.200"/><text x="12.300" y="17.800" text-anchor="middle" font-family="Liberation Sans, sans-serif" font-weight="700" font-size="17" fill="#2b2b2b" textLength="17.500" lengthAdjust="spacingAndGlyphs">ups</text></svg></span><div class="c" style="left:94.8px;width:68.0px"><span>Allan J Land</span></div><div class="c" style="left:162.8px;width:67.0px"><span>Allan J Land</span></div><div class="c" style="left:229.8px;width:79.0px"><span>8/1/2025</span></div><div class="c" style="left:308.8px;width:67.0px"><span>8/1/2025</span></div><div class="c" style="left:375.8px;width:63.0px"><span>1896</span></div><div class="c" style="left:438.8px;width:44.0px"><span>False</span></div><div class="c" style="left:482.8px;width:45.0px"><span></span></div><div class="c" style="left:527.8px;width:57.0px"><span>$0.00</span></div><div class="c" style="left:584.8px;width:84.0px"><span>RECEPTION -<br>COCKTAIL<br>BUFFET</span></div><div class="c" style="left:668.8px;width:67.0px"><span></span></div><div class="c" style="left:735.8px;width:85.0px"><span>Test Event</span></div><div class="c" style="left:820.8px;width:67.0px"><span>The White<br>House</span></div><div class="c" style="left:887.8px;width:62.0px"><span>76527</span></div><div class="c" style="left:949.8px;width:44.0px"><span>TX</span></div><div class="c" style="left:993.8px;width:96.0px"><span></span></div><div class="c" style="left:1089.8px;width:57.0px"><span></span></div><div class="c" style="left:1146.8px;width:56.0px"><span></span></div><div class="c" style="left:1202.8px;width:39.0px"><span></span></div></div><div class="row" style="top:457.2px;height:42.8px"><span class="cb" style="top:17.0px"></span><div class="c" style="left:27.8px;width:67.0px"></div><span class="upsb" style="top:11.4px"><svg class="ups" viewBox="0 0 24 27"><path d="M1.400 3.600C6.500 .4 17.500 .4 22.600 3.600v11.600c0 5.400-5 8-10.600 10.800C6.400 23.200 1.400 20.600 1.400 15.200z" fill="#fdfdfd" stroke="#3b2a1c" stroke-width="1.700"/><path d="M2.600 6.400C8 1.200 19 1 22 3.800" fill="none" stroke="#2a1d12" stroke-width="2.200"/><text x="12.300" y="17.800" text-anchor="middle" font-family="Liberation Sans, sans-serif" font-weight="700" font-size="17" fill="#2b2b2b" textLength="17.500" lengthAdjust="spacingAndGlyphs">ups</text></svg></span><div class="c" style="left:94.8px;width:68.0px"><span>oscar</span></div><div class="c" style="left:162.8px;width:67.0px"><span>Pedro</span></div><div class="c" style="left:229.8px;width:79.0px"><span>8/1/2025</span></div><div class="c" style="left:308.8px;width:67.0px"><span>8/1/2025</span></div><div class="c" style="left:375.8px;width:63.0px"><span>1914</span></div><div class="c" style="left:438.8px;width:44.0px"><span>False</span></div><div class="c" style="left:482.8px;width:45.0px"><span></span></div><div class="c" style="left:527.8px;width:57.0px"><span>$8.46</span></div><div class="c" style="left:584.8px;width:84.0px"><span>RECEPTION -<br>COCKTAIL<br>BUFFET</span></div><div class="c" style="left:668.8px;width:67.0px"><span>Cesar Minas</span></div><div class="c" style="left:735.8px;width:85.0px"><span>Staff not attached 2</span></div><div class="c" style="left:820.8px;width:67.0px"><span>_Client Office</span></div><div class="c" style="left:887.8px;width:62.0px"><span>85001</span></div><div class="c" style="left:949.8px;width:44.0px"><span>AZ</span></div><div class="c" style="left:993.8px;width:96.0px"><span>Pmenjivar@elecated...</span></div><div class="c" style="left:1089.8px;width:57.0px"><span></span></div><div class="c" style="left:1146.8px;width:56.0px"><span></span></div><div class="c" style="left:1202.8px;width:39.0px"><span>False</span></div></div><div class="row alt" style="top:500.0px;height:42.8px"><span class="cb" style="top:17.0px"></span><div class="c" style="left:27.8px;width:67.0px"></div><span class="upsb" style="top:11.4px"><svg class="ups" viewBox="0 0 24 27"><path d="M1.400 3.600C6.500 .4 17.500 .4 22.600 3.600v11.600c0 5.400-5 8-10.600 10.800C6.400 23.200 1.400 20.600 1.400 15.200z" fill="#fdfdfd" stroke="#3b2a1c" stroke-width="1.700"/><path d="M2.600 6.400C8 1.200 19 1 22 3.800" fill="none" stroke="#2a1d12" stroke-width="2.200"/><text x="12.300" y="17.800" text-anchor="middle" font-family="Liberation Sans, sans-serif" font-weight="700" font-size="17" fill="#2b2b2b" textLength="17.500" lengthAdjust="spacingAndGlyphs">ups</text></svg></span><div class="c" style="left:94.8px;width:68.0px"><span>Gabriela</span></div><div class="c" style="left:162.8px;width:67.0px"><span>Gabriela</span></div><div class="c" style="left:229.8px;width:79.0px"><span>8/2/2025</span></div><div class="c" style="left:308.8px;width:67.0px"><span>8/2/2025</span></div><div class="c" style="left:375.8px;width:63.0px"><span>1902</span></div><div class="c" style="left:438.8px;width:44.0px"><span>False</span></div><div class="c" style="left:482.8px;width:45.0px"><span></span></div><div class="c" style="left:527.8px;width:57.0px"><span>$1,406.48</span></div><div class="c" style="left:584.8px;width:84.0px"><span>RECEPTION -<br>COCKTAIL<br>BUFFET</span></div><div class="c" style="left:668.8px;width:67.0px"><span>Chris Marsh</span></div><div class="c" style="left:735.8px;width:85.0px"><span>Credit Limit 2</span></div><div class="c" style="left:820.8px;width:67.0px"><span>_Client Office</span></div><div class="c" style="left:887.8px;width:62.0px"><span>90002</span></div><div class="c" style="left:949.8px;width:44.0px"><span>CA</span></div><div class="c" style="left:993.8px;width:96.0px"><span>jestrada@cikume.com</span></div><div class="c" style="left:1089.8px;width:57.0px"><span></span></div><div class="c" style="left:1146.8px;width:56.0px"><span></span></div><div class="c" style="left:1202.8px;width:39.0px"><span>False</span></div></div><div class="row" style="top:542.8px;height:31.5px"><span class="cb" style="top:11.3px"></span><div class="c" style="left:27.8px;width:67.0px"></div><span class="upsb" style="top:5.8px"><svg class="ups" viewBox="0 0 24 27"><path d="M1.400 3.600C6.500 .4 17.500 .4 22.600 3.600v11.600c0 5.400-5 8-10.600 10.800C6.400 23.200 1.400 20.600 1.400 15.200z" fill="#fdfdfd" stroke="#3b2a1c" stroke-width="1.700"/><path d="M2.600 6.400C8 1.200 19 1 22 3.800" fill="none" stroke="#2a1d12" stroke-width="2.200"/><text x="12.300" y="17.800" text-anchor="middle" font-family="Liberation Sans, sans-serif" font-weight="700" font-size="17" fill="#2b2b2b" textLength="17.500" lengthAdjust="spacingAndGlyphs">ups</text></svg></span><div class="c" style="left:94.8px;width:68.0px"><span>Ana J Evans</span></div><div class="c" style="left:162.8px;width:67.0px"><span>Ana J Evans</span></div><div class="c" style="left:229.8px;width:79.0px"><span>8/8/2025</span></div><div class="c" style="left:308.8px;width:67.0px"><span>8/8/2025</span></div><div class="c" style="left:375.8px;width:63.0px"><span>1915</span></div><div class="c" style="left:438.8px;width:44.0px"><span>False</span></div><div class="c" style="left:482.8px;width:45.0px"><span></span></div><div class="c" style="left:527.8px;width:57.0px"><span>$0.00</span></div><div class="c" style="left:584.8px;width:84.0px"><span>MUSIC EVENTS</span></div><div class="c" style="left:668.8px;width:67.0px"><span>Chris Marsh</span></div><div class="c" style="left:735.8px;width:85.0px"><span>Auto Gen Event</span></div><div class="c" style="left:820.8px;width:67.0px"><span>The White<br>House</span></div><div class="c" style="left:887.8px;width:62.0px"><span>93307</span></div><div class="c" style="left:949.8px;width:44.0px"><span>CA</span></div><div class="c" style="left:993.8px;width:96.0px"><span></span></div><div class="c" style="left:1089.8px;width:57.0px"><span></span></div><div class="c" style="left:1146.8px;width:56.0px"><span></span></div><div class="c" style="left:1202.8px;width:39.0px"><span></span></div></div><div class="row alt" style="top:574.3px;height:42.7px"><span class="cb" style="top:17.0px"></span><div class="c" style="left:27.8px;width:67.0px"></div><span class="upsb" style="top:11.4px"><svg class="ups" viewBox="0 0 24 27"><path d="M1.400 3.600C6.500 .4 17.500 .4 22.600 3.600v11.600c0 5.400-5 8-10.600 10.800C6.400 23.200 1.400 20.600 1.400 15.200z" fill="#fdfdfd" stroke="#3b2a1c" stroke-width="1.700"/><path d="M2.600 6.400C8 1.200 19 1 22 3.800" fill="none" stroke="#2a1d12" stroke-width="2.200"/><text x="12.300" y="17.800" text-anchor="middle" font-family="Liberation Sans, sans-serif" font-weight="700" font-size="17" fill="#2b2b2b" textLength="17.500" lengthAdjust="spacingAndGlyphs">ups</text></svg></span><div class="c" style="left:94.8px;width:68.0px"><span>BluePeace</span></div><div class="c" style="left:162.8px;width:67.0px"><span>Sarah Jhonson</span></div><div class="c" style="left:229.8px;width:79.0px"><span>8/8/2025</span></div><div class="c" style="left:308.8px;width:67.0px"><span>8/8/2025</span></div><div class="c" style="left:375.8px;width:63.0px"><span>1870</span></div><div class="c" style="left:438.8px;width:44.0px"><span>False</span></div><div class="c" style="left:482.8px;width:45.0px"><span></span></div><div class="c" style="left:527.8px;width:57.0px"><span>$1,288.76</span></div><div class="c" style="left:584.8px;width:84.0px"><span>RECEPTION -<br>COCKTAIL<br>BUFFET</span></div><div class="c" style="left:668.8px;width:67.0px"><span>Chris Marsh</span></div><div class="c" style="left:735.8px;width:85.0px"><span>Test 20</span></div><div class="c" style="left:820.8px;width:67.0px"><span>_Client Pickup</span></div><div class="c" style="left:887.8px;width:62.0px"><span>20001</span></div><div class="c" style="left:949.8px;width:44.0px"><span>DC</span></div><div class="c" style="left:993.8px;width:96.0px"><span>sjhonson@bluepeac...</span></div><div class="c" style="left:1089.8px;width:57.0px"><span></span></div><div class="c" style="left:1146.8px;width:56.0px"><span></span></div><div class="c" style="left:1202.8px;width:39.0px"><span>False</span></div></div><div class="row" style="top:617.0px;height:42.8px"><span class="cb" style="top:17.0px"></span><div class="c" style="left:27.8px;width:67.0px"></div><span class="upsb" style="top:11.4px"><svg class="ups" viewBox="0 0 24 27"><path d="M1.400 3.600C6.500 .4 17.500 .4 22.600 3.600v11.600c0 5.400-5 8-10.600 10.800C6.400 23.200 1.400 20.600 1.400 15.200z" fill="#fdfdfd" stroke="#3b2a1c" stroke-width="1.700"/><path d="M2.600 6.400C8 1.200 19 1 22 3.800" fill="none" stroke="#2a1d12" stroke-width="2.200"/><text x="12.300" y="17.800" text-anchor="middle" font-family="Liberation Sans, sans-serif" font-weight="700" font-size="17" fill="#2b2b2b" textLength="17.500" lengthAdjust="spacingAndGlyphs">ups</text></svg></span><div class="c" style="left:94.8px;width:68.0px"><span></span></div><div class="c" style="left:162.8px;width:67.0px"><span>Dr. Berta<br>&nbsp;</span></div><div class="c" style="left:229.8px;width:79.0px"><span></span></div><div class="c" style="left:308.8px;width:67.0px"><span></span></div><div class="c" style="left:375.8px;width:63.0px"><span></span></div><div class="c" style="left:438.8px;width:44.0px"><span></span></div><div class="c" style="left:482.8px;width:45.0px"><span></span></div><div class="c" style="left:527.8px;width:57.0px"><span></span></div><div class="c" style="left:584.8px;width:84.0px"><span>RECEPTION -<br>COCKTAIL<br>BUFFET</span></div><div class="c" style="left:668.8px;width:67.0px"><span></span></div><div class="c" style="left:735.8px;width:85.0px"><span></span></div><div class="c" style="left:820.8px;width:67.0px"><span>Krissia QA<br>&nbsp;</span></div><div class="c" style="left:887.8px;width:62.0px"><span></span></div><div class="c" style="left:949.8px;width:44.0px"><span></span></div><div class="c" style="left:993.8px;width:96.0px"><span></span></div><div class="c" style="left:1089.8px;width:57.0px"><span></span></div><div class="c" style="left:1146.8px;width:56.0px"><span></span></div><div class="c" style="left:1202.8px;width:39.0px"><span></span></div></div><div class="abs" style="left:176px;top:200.600px;width:1px;height:434px;background:rgba(0,0,0,.065)"></div><div class="abs" style="left:243px;top:200.600px;width:1px;height:434px;background:rgba(0,0,0,.065)"></div><div class="abs" style="left:311px;top:200.600px;width:1px;height:434px;background:rgba(0,0,0,.065)"></div><div class="abs" style="left:378px;top:200.600px;width:1px;height:434px;background:rgba(0,0,0,.065)"></div><div class="abs" style="left:457px;top:200.600px;width:1px;height:434px;background:rgba(0,0,0,.065)"></div><div class="abs" style="left:524px;top:200.600px;width:1px;height:434px;background:rgba(0,0,0,.065)"></div><div class="abs" style="left:587px;top:200.600px;width:1px;height:434px;background:rgba(0,0,0,.065)"></div><div class="abs" style="left:631px;top:200.600px;width:1px;height:434px;background:rgba(0,0,0,.065)"></div><div class="abs" style="left:676px;top:200.600px;width:1px;height:434px;background:rgba(0,0,0,.065)"></div><div class="abs" style="left:733px;top:200.600px;width:1px;height:434px;background:rgba(0,0,0,.065)"></div><div class="abs" style="left:817px;top:200.600px;width:1px;height:434px;background:rgba(0,0,0,.065)"></div><div class="abs" style="left:884px;top:200.600px;width:1px;height:434px;background:rgba(0,0,0,.065)"></div><div class="abs" style="left:969px;top:200.600px;width:1px;height:434px;background:rgba(0,0,0,.065)"></div><div class="abs" style="left:1036px;top:200.600px;width:1px;height:434px;background:rgba(0,0,0,.065)"></div><div class="abs" style="left:1098px;top:200.600px;width:1px;height:434px;background:rgba(0,0,0,.065)"></div><div class="abs" style="left:1142px;top:200.600px;width:1px;height:434px;background:rgba(0,0,0,.065)"></div><div class="abs" style="left:1238px;top:200.600px;width:1px;height:434px;background:rgba(0,0,0,.065)"></div><div class="abs" style="left:1295px;top:200.600px;width:1px;height:434px;background:rgba(0,0,0,.065)"></div><div class="abs" style="left:1351px;top:200.600px;width:1px;height:434px;background:rgba(0,0,0,.065)"></div><div class="abs" style="left:148.200px;top:634px;width:1252.400px;height:11.600px;background:#fafafa;border-bottom:.8px solid #e6e6e6"></div><div class="abs" style="left:165.500px;top:636.400px;width:1190.300px;height:6.600px;border-radius:3.300px;background:#8b8b8b"></div><svg class="abs" style="left:154px;top:636.100px" width="6" height="7.400" viewBox="0 0 6 8"><path d="M6 0v8L0 4z" fill="#8b8b8b"/></svg><svg class="abs" style="left:1378.600px;top:636.100px" width="6" height="7.400" viewBox="0 0 6 8"><path d="M0 0v8l6-4z" fill="#8b8b8b"/></svg><div class="abs" style="left:1390.300px;top:200.800px;width:10.300px;height:433.200px;background:#fafafa"></div><div class="abs" style="left:1392.300px;top:219px;width:6.300px;height:231px;border-radius:3.100px;background:#8b8b8b"></div><svg class="abs" style="left:1392px;top:207.200px" width="7" height="5.400" viewBox="0 0 8 6"><path d="M0 6h8L4 0z" fill="#8b8b8b"/></svg><svg class="abs" style="left:1392px;top:622.400px" width="7" height="5.400" viewBox="0 0 8 6"><path d="M0 0h8L4 6z" fill="#8b8b8b"/></svg><div class="abs" style="left:148.200px;top:646.400px;width:1252.400px;height:20px;background:#fafafa"></div><div class="abs" style="left:186.400px;top:650.300px;width:16.400px;height:16px;background:#ffd7d6;border-radius:1.500px"></div><div class="abs" style="left:186.6px;top:651.700px;width:16px;text-align:center;font-size:8px;line-height:11px;color:#f4524d">1</div><div class="abs" style="left:203.8px;top:651.700px;width:16px;text-align:center;font-size:8px;line-height:11px;color:#f4524d">2</div><div class="abs" style="left:220.3px;top:651.700px;width:16px;text-align:center;font-size:8px;line-height:11px;color:#f4524d">3</div><div class="abs" style="left:237.2px;top:651.700px;width:16px;text-align:center;font-size:8px;line-height:11px;color:#f4524d">4</div><div class="abs" style="left:1300px;top:652.800px;width:96.500px;text-align:right;font-size:8px;line-height:11px;color:#424242;white-space:nowrap">1 - 18 of 72 items</div><svg class="abs" style="left:157.5px;top:655.500px" width="4.500" height="6" viewBox="0 0 5 8"><path d="M5 0v8L0 4zM0 0h1.200v8H0z" fill="#666"/></svg><svg class="abs" style="left:176.2px;top:655.500px" width="4.500" height="6" viewBox="0 0 5 8"><path d="M5 0v8L0 4z" fill="#666"/></svg><svg class="abs" style="left:258.5px;top:655.500px" width="4.500" height="6" viewBox="0 0 5 8"><path d="M0 0v8l5-4z" fill="#666"/></svg><svg class="abs" style="left:276.5px;top:655.500px" width="4.500" height="6" viewBox="0 0 5 8"><path d="M0 0v8l5-4zM3.800 0H5v8H3.800z" fill="#666"/></svg><div class="abs" style="left:1417.700px;top:0;width:11px;height:658px;background:#fcfcfc"></div><div class="abs" style="left:1420.200px;top:17px;width:6.200px;height:630px;border-radius:3.100px;background:#8b8b8b"></div><svg class="abs" style="left:1419.800px;top:5.600px" width="7" height="4.800" viewBox="0 0 8 6"><path d="M0 6h8L4 0z" fill="#8b8b8b"/></svg><div class="abs" style="left:1428.700px;top:0;width:2.500px;height:658px;background:#3a4880"></div><div class="abs" style="left:1431px;top:0;width:3px;height:658px;background:#07070f"></div></body></html>
